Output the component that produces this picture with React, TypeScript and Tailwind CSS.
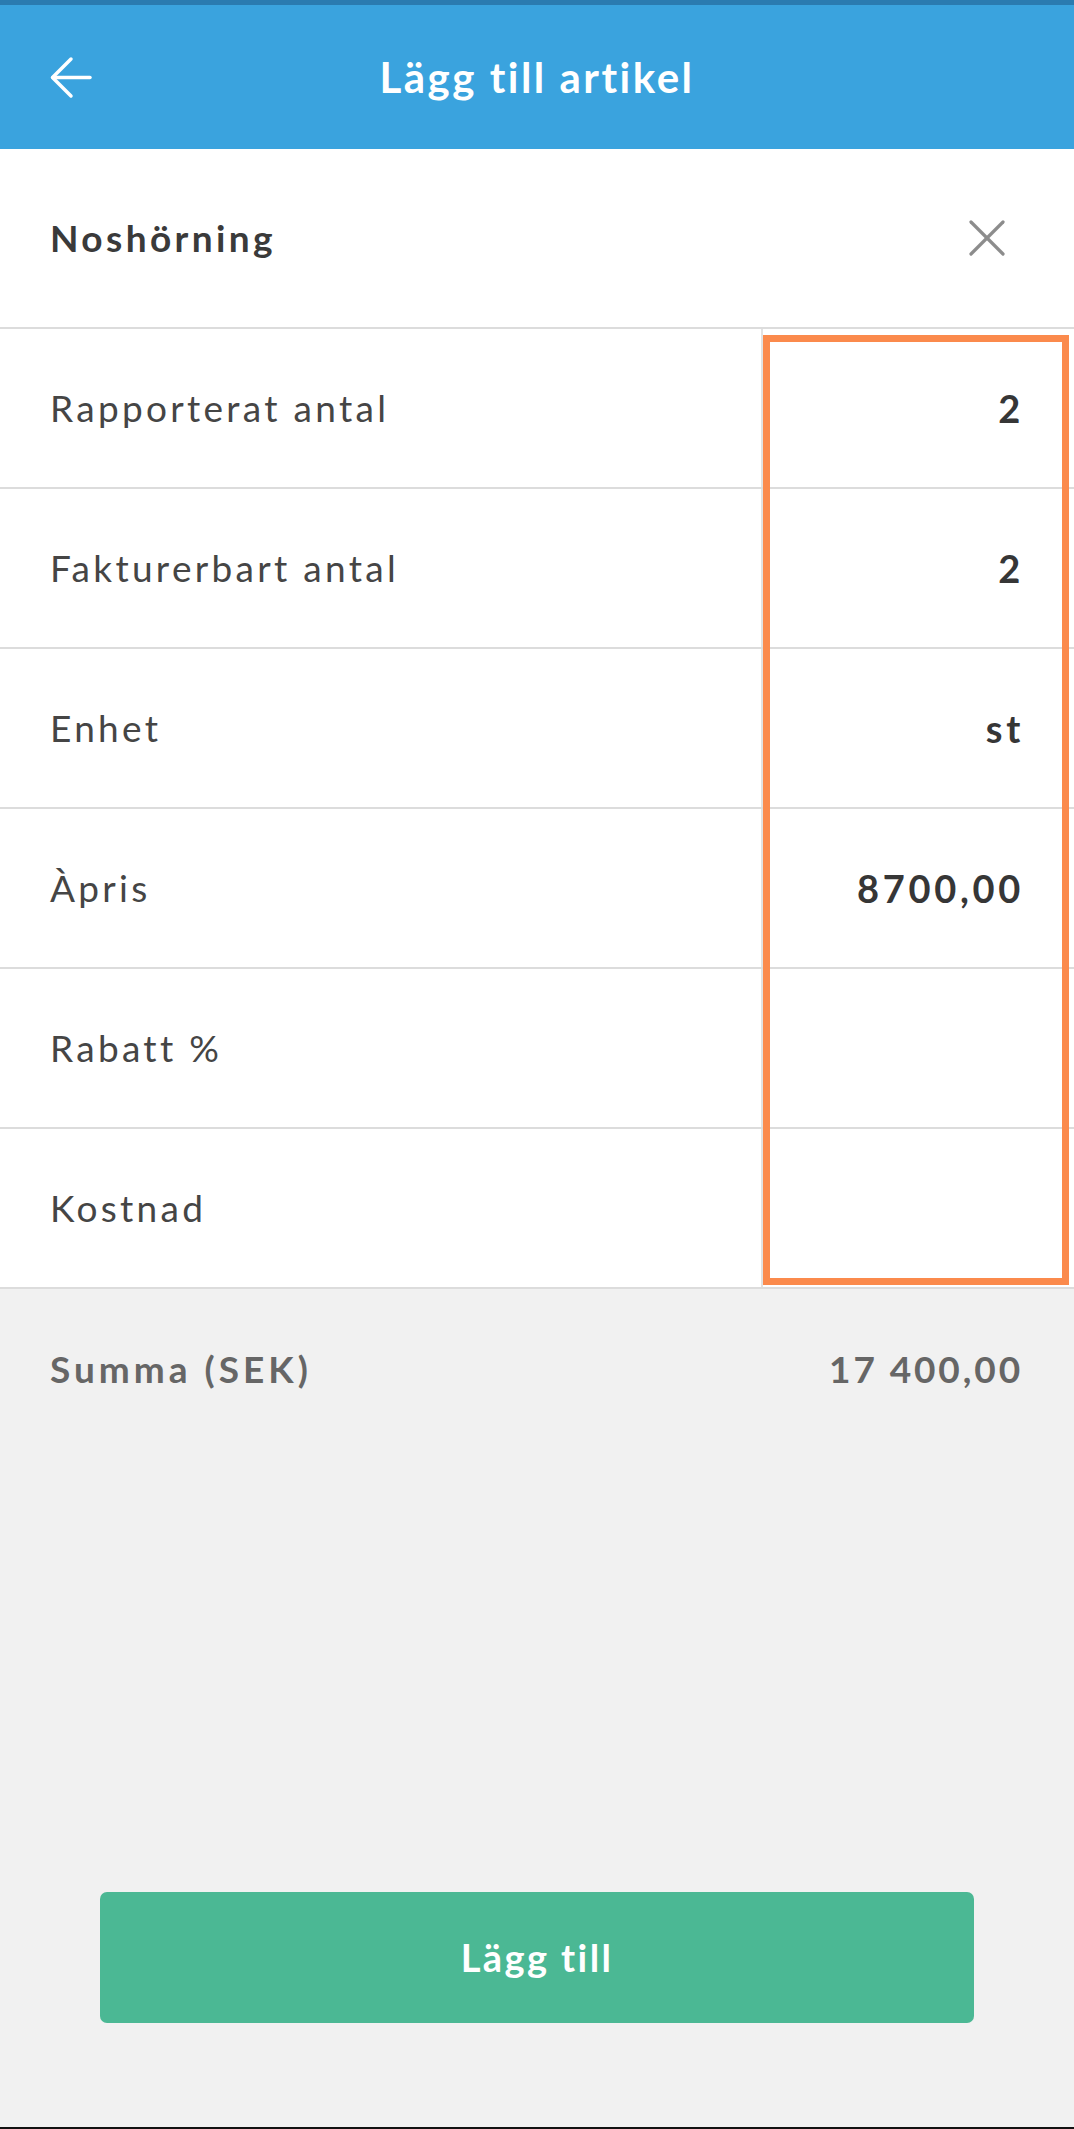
import React from "react";

const rows: { label: string; value: string }[] = [
  { label: "Rapporterat antal", value: "2" },
  { label: "Fakturerbart antal", value: "2" },
  { label: "Enhet", value: "st" },
  { label: "Àpris", value: "8700,00" },
  { label: "Rabatt %", value: "" },
  { label: "Kostnad", value: "" },
];

export default function App() {
  return (
    <div
      className="w-[1074px] h-[2129px] flex flex-col bg-[#f1f1f1] overflow-hidden"
      style={{ fontFamily: "Lato, 'Noto Sans', sans-serif" }}
    >
      {/* status strip + header */}
      <div className="h-[5px] bg-[#2a7bb0]" />
      <div className="h-[144px] bg-[#3aa3de] flex items-center relative">
        <div className="absolute left-[48px] top-[50px]">
          <svg width="46" height="46" viewBox="0 0 46 46" fill="none" stroke="white" strokeWidth="3.5" strokeLinecap="round" strokeLinejoin="round">
            <path d="M42 22.5H5" />
            <path d="M23 4L4.5 22.5L23 41" />
          </svg>
        </div>
        <div className="w-full text-center text-white font-bold text-[42px] tracking-[2.5px] leading-none">
          Lägg till artikel
        </div>
      </div>

      {/* name row */}
      <div className="h-[180px] bg-white border-b-2 border-[#dcdcdc] flex items-center justify-between pl-[50px] pr-[68px]">
        <span className="font-bold text-[37px] text-[#3a3a3a] tracking-[3.4px]">Noshörning</span>
        <svg width="38" height="38" viewBox="0 0 38 38" fill="none" stroke="#8c8c8c" strokeWidth="3.2" strokeLinecap="round">
          <path d="M3 3L35 35" />
          <path d="M35 3L3 35" />
        </svg>
      </div>

      {/* table rows */}
      <div className="relative bg-white">
        {rows.map((r) => (
          <div key={r.label} className="h-[160px] border-b-2 border-[#dcdcdc] flex">
            <div className="w-[761px] flex items-center pl-[50px] text-[37px] text-[#454545] tracking-[3.3px]">
              {r.label}
            </div>
            <div className="w-[2px] bg-[#e2e2e2]" />
            <div className="flex-1 flex items-center justify-end pr-[50px] text-[38px] font-bold text-[#363636] tracking-[3.7px]">
              {r.value}
            </div>
          </div>
        ))}
        <div className="absolute left-[763px] top-[6px] w-[306px] h-[950px] border-[7px] border-[#fb8a4c] pointer-events-none" />
      </div>

      {/* summary */}
      <div className="h-[160px] flex items-center justify-between pl-[50px] pr-[51px] text-[#666666] font-bold text-[37px]">
        <span className="tracking-[4px]">Summa (SEK)</span>
        <span className="tracking-[2.9px]">17 400,00</span>
      </div>

      <div className="flex-1 flex flex-col justify-end pb-[104px]">
        <div className="mx-[100px] h-[131px] rounded-[7px] bg-[#4bb894] flex items-center justify-center text-white font-bold text-[38px] tracking-[2.4px]">
          Lägg till
        </div>
      </div>
      <div className="h-[2px] bg-[#111111]" />
    </div>
  );
}
